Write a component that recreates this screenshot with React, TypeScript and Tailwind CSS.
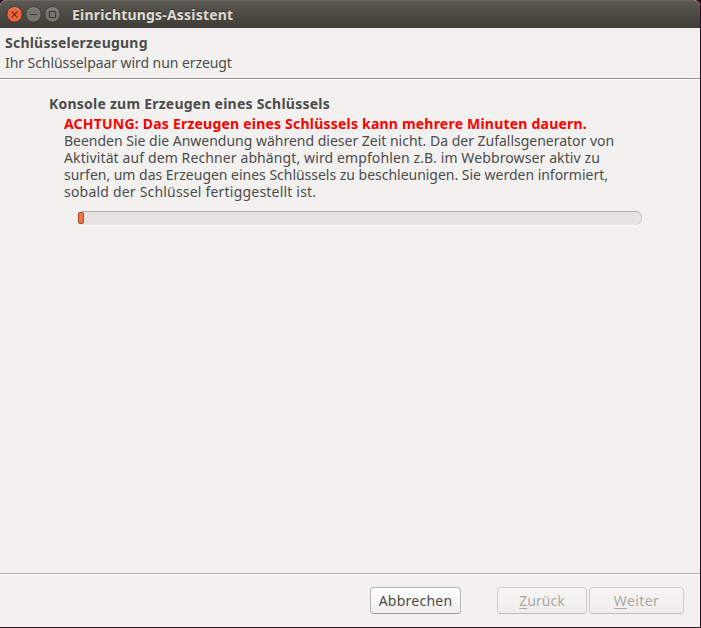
import React from "react";

function WindowButton({ close, children }: { close?: boolean; children: React.ReactNode }) {
  return (
    <svg width="17" height="17" viewBox="0 0 17 17" fill="none" strokeWidth="1.2">
      <circle cx="8.5" cy="8.5" r="7.7" fill={close ? "#ee6339" : "#777670"} stroke="#393832" strokeWidth="1" />
      <path d="M2.2 5.5a7 7 0 0 1 12.6 0" stroke={close ? "#f79375" : "#96948b"} strokeWidth="0.8" />
      <g stroke={close ? "#552b1d" : "#3c3b37"}>{children}</g>
    </svg>
  );
}

function Line({ className, children }: { className: string; children: React.ReactNode }) {
  return (
    <div className="flex h-[17px] items-center">
      <span className={"whitespace-pre " + className}>{children}</span>
    </div>
  );
}

export default function App() {
  return (
    <div className="h-[628px] w-[701px] overflow-hidden border-r border-b border-r-[#2e0420] border-b-[#431723] bg-[#2c001e] font-['Noto_Sans','Open_Sans',sans-serif] text-[14px] leading-[17px] text-[#4c4c4c]">
      <div className="flex h-full flex-col overflow-hidden rounded-t-[6px] bg-[#f2f1ef]">
        <header className="flex h-7 shrink-0 items-center rounded-t-[6px] border-t border-[#6a675e] bg-linear-to-b from-[#5b584f] to-[#3e3d38] pl-[6px]">
          <div className="flex gap-[2px]">
            <WindowButton close>
              <path d="M5.7 5.7l5.6 5.6M11.3 5.7l-5.6 5.6" />
            </WindowButton>
            <WindowButton>
              <path d="M5 8.5h7" />
            </WindowButton>
            <WindowButton>
              <path d="M5.5 5.5h6v6h-6z" />
            </WindowButton>
          </div>
          <h1 className="ml-[11px] whitespace-pre font-bold tracking-[0.19px] text-[#dfdbd2] [text-shadow:0_-1px_0_#333]">Einrichtungs-Assistent</h1>
        </header>

        <section className="flex h-[51px] shrink-0 flex-col gap-[3px] border-b border-[#8e8e8c] pt-[6px] pl-[5px] shadow-[0_1px_0_#fff]">
          <Line className="font-bold tracking-[0.22px]">Schlüsselerzeugung</Line>
          <Line className="tracking-[-0.07px]">Ihr Schlüsselpaar wird nun erzeugt</Line>
        </section>

        <main className="flex grow flex-col pt-[16px] pl-[49px]">
          <Line className="font-bold tracking-[0.23px]">Konsole zum Erzeugen eines Schlüssels</Line>
          <div className="mt-[3px] pl-[15px]">
            <Line className="font-bold tracking-[0.21px] text-[#ff0000]">ACHTUNG: Das Erzeugen eines Schlüssels kann mehrere Minuten dauern.</Line>
            <Line className="tracking-[-0.01px]">Beenden Sie die Anwendung während dieser Zeit nicht. Da der Zufallsgenerator von</Line>
            <Line className="tracking-[0.11px]">Aktivität auf dem Rechner abhängt, wird empfohlen z.B. im Webbrowser aktiv zu</Line>
            <Line className="tracking-[-0.02px]">surfen, um das Erzeugen eines Schlüssels zu beschleunigen. Sie werden informiert,</Line>
            <Line className="tracking-[0.2px]">sobald der Schlüssel fertiggestellt ist.</Line>
          </div>
          <div className="mt-[11px] ml-[28px] flex h-[14px] w-[565px] items-start rounded-[6px] border-t border-[#b8b4b0] bg-[#e4e3e1] shadow-[0_1px_0_#fff,inset_-1px_0_0_#d0cecb]">
            <div className="ml-px h-[12px] w-[6px] rounded-[2px] border border-[#a64d31] bg-[#f07746]" />
          </div>
        </main>

        <footer className="flex h-[54px] shrink-0 items-start border-t border-[#b0afad] pt-[13px] pl-[370px] shadow-[inset_0_1px_0_#fff]">
          <button className="flex h-[27px] w-[91px] items-center justify-center rounded-[4px] border border-[#b6b4b1] border-b-[#9e9c99] bg-linear-to-b from-white to-[#efeeec]">
            <span className="whitespace-pre tracking-[0.25px]">Abbrechen</span>
          </button>
          <button disabled className="ml-[36px] flex h-[27px] w-[90px] items-center justify-center rounded-[4px] border border-[#cfcdcb] border-b-[#c0bebc] bg-linear-to-b from-[#f7f6f5] to-[#efeeec] text-[#aaa8a5]">
            <span className="whitespace-pre"><u className="underline-offset-2">Z</u>urück</span>
          </button>
          <button disabled className="ml-[2px] flex h-[27px] w-[95px] items-center justify-center rounded-[4px] border border-[#cfcdcb] border-b-[#c0bebc] bg-linear-to-b from-[#f7f6f5] to-[#efeeec] text-[#aaa8a5]">
            <span className="whitespace-pre tracking-[0.4px]"><u className="underline-offset-2">W</u>eiter</span>
          </button>
        </footer>
      </div>
    </div>
  );
}
